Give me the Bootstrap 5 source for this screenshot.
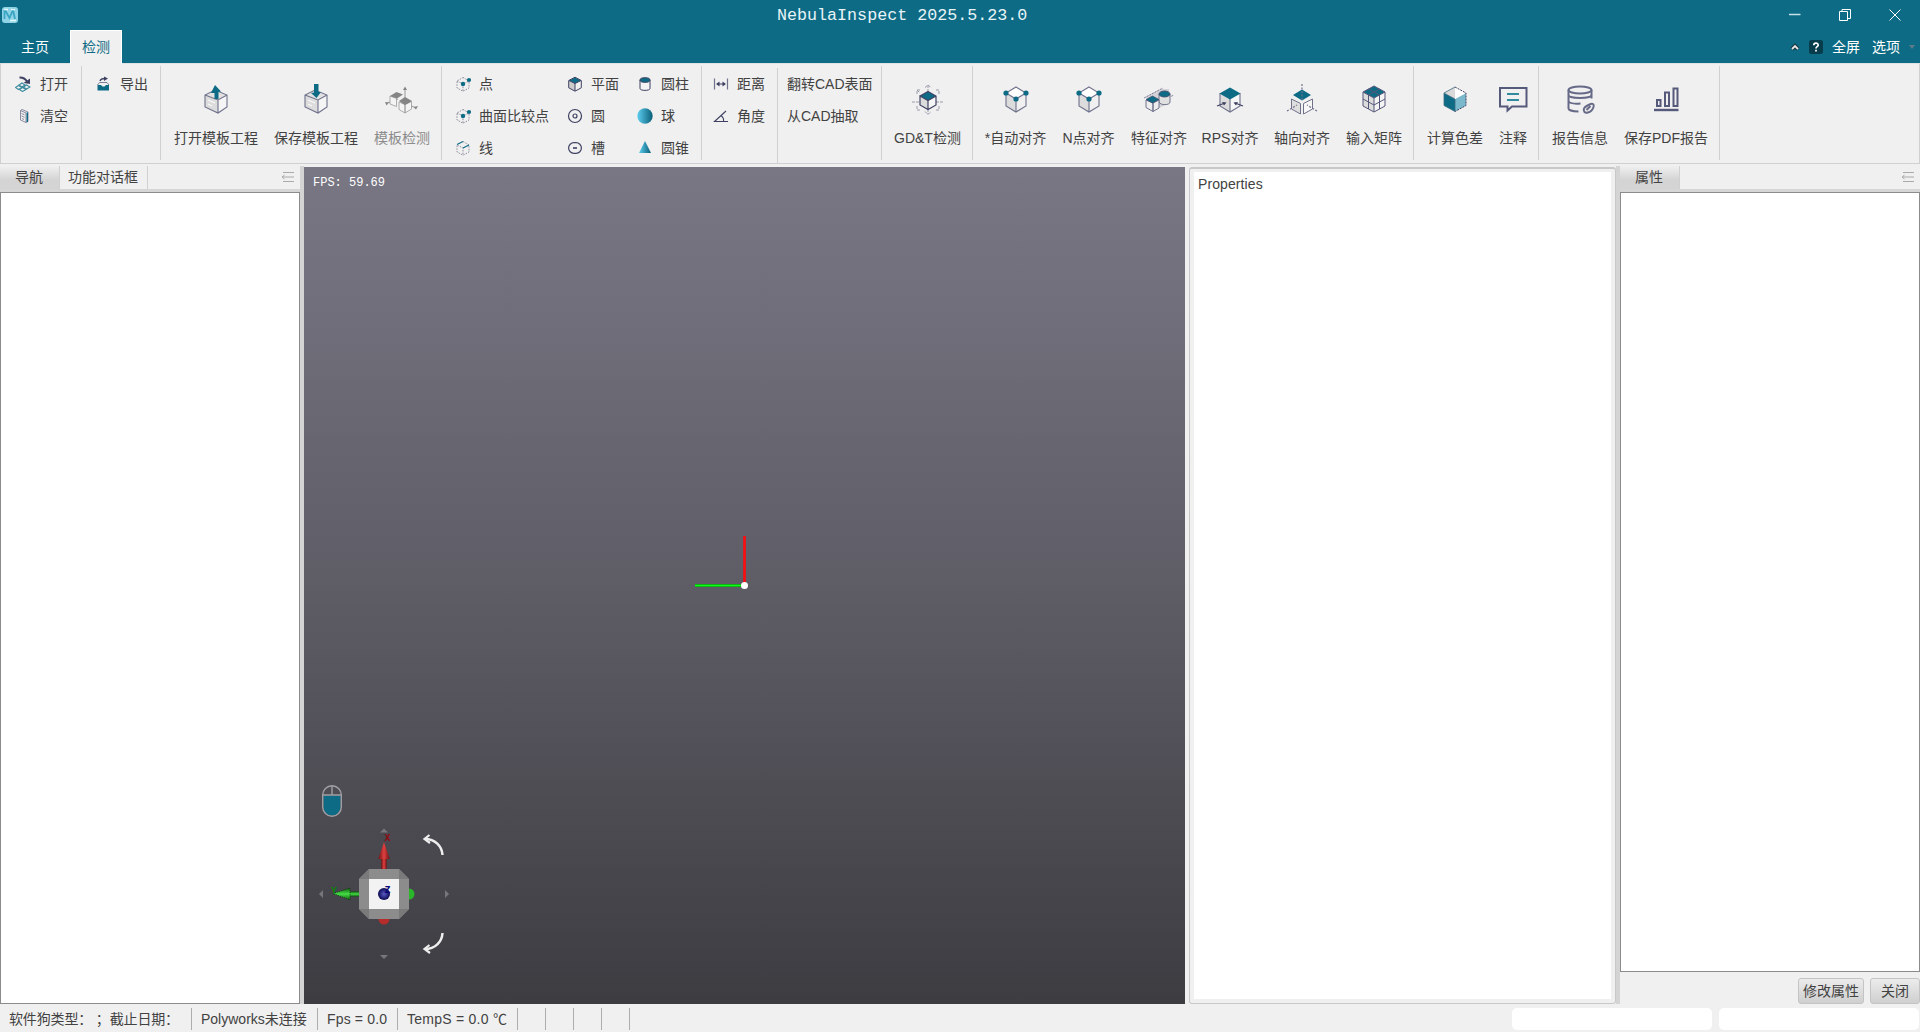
<!DOCTYPE html>
<html lang="zh-CN">
<head>
<meta charset="utf-8">
<title>NebulaInspect 2025.5.23.0</title>
<link rel="stylesheet" href="https://cdn.jsdelivr.net/npm/bootstrap@5.3.0/dist/css/bootstrap.min.css">
<style>
:root{--teal:#0d6b85;--ink:#3f4163;--panel:#f0f0f0;--rule:#d0d0d0}
body{width:1920px;height:1032px;overflow:hidden;background:var(--panel);color:#424242;font:14px/20px "Liberation Sans","Noto Sans CJK SC",sans-serif}
svg{display:block;flex:none;fill:none}
.titlebar{height:63px;background:var(--teal);color:#fff}
.caption-row{height:30px}
.app-title{font:16.7px/32px "Liberation Mono",monospace;color:#e8f4f7}
.side{width:777px}
.tab-row{height:33px}
.rtab{width:70px;padding-right:0;line-height:34px;text-align:center}
.rtab.on{width:52px;background:var(--panel);color:var(--teal);border:1px solid #fff;border-bottom:0;line-height:33px;height:34px}
.win-ctl{gap:38px;padding-right:19px}
.ribbon{height:101px;border:1px solid var(--rule);border-top-color:#dfe3e4}
.grp{height:94px;margin-top:2px;border-right:1px solid var(--rule);flex:none}
.grp.tall{height:96px;margin-top:4px}
.tcol{padding-top:2px}
.tall.tcol{padding-top:0}
.tool{height:32px;gap:9px;white-space:nowrap}
.g-open{width:81px;padding-left:14px}
.g-export{width:79px;padding-left:13px}
.g-template{width:281px;padding-left:5px}
.g-feature{width:260px;padding-left:13px}
.g-feature .tool{gap:8px}
.c1{width:112px}.c2{width:70px}
.g-dist{width:76px;padding-left:11px}
.g-dist .tool{gap:8px}
.g-cad{width:104px;padding-left:9px}
.g-gdt{width:91px;padding-left:4px}
.g-align{width:441px;padding-left:5px}
.g-color{width:125px;padding-left:5px}
.g-report{width:181px;padding-left:5px}
.big{padding:17px 8px 0;gap:13px;white-space:nowrap}
.big svg{width:32px;height:32px}
.big.off{color:#8b8b8b}
.g-align .big{width:72px;padding-left:0;padding-right:0;flex:none}
.g-align .big:first-child{width:75px}
.g-align .big:nth-child(2){width:71px}
.g-align .big:nth-child(3){width:70px}
.big.note{padding-left:6px}
.work{height:840px}
.dock{width:300px;padding-top:2px}
.dock-tabs{height:26px;border-bottom:3px solid #d6d6d6}
.dtab{height:23px;line-height:22px;border-right:1px solid var(--rule)}
.dtab.on{background:linear-gradient(#f0f0f0,#d4d4d4 60%)}
.w-nav{width:60px;padding-left:15px}.w-dlg{width:88px;padding-left:8px}
.tree{background:#fff;border:1px solid #8c8c8c}
.split{width:4px;background:#d4d4d4;margin-top:2px}
.view{width:881px;margin-top:3px;background:linear-gradient(#797784,#5e5d66 50%,#3d3c41)}
.fps{top:8px;left:9px;font:12px/17px "Liberation Mono",monospace;color:#fff}
.props{width:427px;margin:3px 0 0 4px;border:1px solid #c8c8c8;border-top-width:2px;border-radius:3px;padding:3px 4px 4px}
.props>div{background:#fff;height:100%;padding:2px 4px;letter-spacing:.1px}
.btn-row{height:32px;gap:6px;padding-top:6px}
.btn.act{height:26px;padding:0;font-size:14px;line-height:24px;border:1px solid #c4c4c4;border-radius:3px;background:linear-gradient(#ececec,#cfcfcf);color:#424242}
.a1{width:66px}.a2{width:50px}
.status{height:28px;padding-top:4px}
.cell{height:22px;line-height:23px;border-right:1px solid #adadad;padding-left:9px;white-space:pre;flex:none}
.s1{width:192px;letter-spacing:-.15px}.s2{width:126px}.s3{width:80px;letter-spacing:.15px}.s4{width:120px;letter-spacing:.25px}.s5{width:28px}
.field{width:200px;height:22px;border-radius:5px;background:#fff}
.fields{gap:7px;padding-right:1px}
</style>
<script src="https://cdn.jsdelivr.net/npm/bootstrap@5.3.0/dist/js/bootstrap.bundle.min.js"></script>
</head>
<body>
<svg width="0" height="0" class="position-absolute">
 <defs>
  <linearGradient id="shine"><stop offset="0" stop-color="#5dcdf0"/><stop offset="1" stop-color="#0a5f78"/></linearGradient>
  <linearGradient id="rg"><stop offset="0" stop-color="#6e1212"/><stop offset=".5" stop-color="#e04040"/><stop offset="1" stop-color="#6e1212"/></linearGradient>
  <linearGradient id="gg" x2="0" y2="1"><stop offset="0" stop-color="#0c5a0c"/><stop offset=".5" stop-color="#45dd45"/><stop offset="1" stop-color="#0c5a0c"/></linearGradient>
  <radialGradient id="bg"><stop offset="0" stop-color="#5a5ac8"/><stop offset="1" stop-color="#0a0a50"/></radialGradient>
  <symbol id="pt" viewBox="0 0 16 16" overflow="visible"><path d="M8 1.5 14 5v7l-6 3.200L2 12V5ZM2 5l6 3 6-3M8 8v7" stroke="#8d8ea0" stroke-dasharray="1.5 1.2"/><circle cx="8" cy="8" r="2.200" fill="#0d6b85"/><circle cx="14" cy="4" r="2.100" fill="#0d6b85"/></symbol>
  <symbol id="box" viewBox="0 0 32 32"><path d="M5 12v12l13 6V17Z" fill="#dcdcdc"/><path d="M18 17v13l9-6V12Z" fill="#f5f5f5"/><path d="M5 12 15 7l12 5-9 5Z" fill="#e2e2e2"/><path d="M5 12v12l13 6 9-6V12L15 7ZM5 12l13 5 9-5M18 17v13" stroke="#70728c" stroke-width="1.1"/><path d="m8 17 7 3M8 21l4 2" stroke="#fff" stroke-width="1"/></symbol>
  <symbol id="ncube" viewBox="0 0 32 32"><path d="M6 10v13l10 6V16Z" fill="#dcdcdc"/><path d="m6 10 10-6 10 6-10 6Z" fill="#fff"/><path d="m16 4 10 6v13l-10 6-10-6V10ZM6 10l10 6 10-6M16 16v13" stroke="#70728c" stroke-width="1.1"/><g fill="#0d6b85"><circle cx="6" cy="10" r="2.6"/><circle cx="26" cy="10" r="2.6"/><circle cx="16" cy="16" r="2.6"/></g></symbol>
  <symbol id="menu" viewBox="0 0 14 12"><path d="M2 1.500h11M1 6h12M2 10.500h11M3.500 4 1 6l2.500 2" stroke="#aaa"/></symbol>
 </defs>
</svg>

<header class="titlebar">
 <div class="caption-row d-flex">
  <div class="side d-flex align-items-center">
   <svg width="20" height="20" viewBox="0 0 20 20"><rect x="2" y="2" width="16" height="16" rx="3" fill="#8fd4e6"/><path d="M4.500 5v9M5 5l4.500 8L13 5l2 9" stroke="#3aa5c4" stroke-width="1.800"/><path d="M4 4.500h4M11 4.500h4M10 15.500h6" stroke="#e4f8fd" stroke-width="1.500"/></svg>
  </div>
  <div class="app-title">NebulaInspect 2025.5.23.0</div>
  <div class="win-ctl d-flex align-items-center ms-auto">
   <svg width="12" height="12" viewBox="0 0 12 12"><path d="M0 5.500h11.500" stroke="#c5e0e7" stroke-width="1.500"/></svg>
   <svg width="12" height="12" viewBox="0 0 12 12"><path d="M.5 2.500h8v9h-8ZM3 2.500v-2h8.500v9H8.500" stroke="#fff"/></svg>
   <svg width="12" height="12" viewBox="0 0 12 12"><path d="m.5.5 11 11m0-11-11 11" stroke="#fff"/></svg>
  </div>
 </div>
 <div class="tab-row d-flex">
  <div class="rtab">主页</div>
  <div class="rtab on">检测</div>
  <div class="d-flex align-items-center ms-auto pe-1">
   <svg width="10" height="8" viewBox="0 0 10 8" class="me-2"><path d="M2 6 5 3l3 3" stroke="#17333c" stroke-width="4"/><path d="M2 6 5 3l3 3" stroke="#e6e6e6" stroke-width="1.800"/></svg>
   <svg width="16" height="16" viewBox="0 0 16 16"><rect x="1" y="1" width="14" height="14" rx="2.500" fill="#073c4b"/><path d="M5.800 6.200C5.800 3.500 10.200 3.600 10.200 6c0 1.600-2.200 1.600-2.200 3.400M8 10.800v1.700" stroke="#fff" stroke-width="1.700"/></svg>
   <span class="ms-2">全屏</span><span class="ms-2 ps-1">选项</span>
   <svg width="8" height="6" viewBox="0 0 8 6" class="ms-2"><path d="M1 1h6L4 5Z" fill="#5d7d87"/></svg>
  </div>
 </div>
</header>

<nav class="ribbon d-flex">
 <div class="grp g-open tcol">
  <div class="tool d-flex align-items-center"><svg width="16" height="16" viewBox="0 0 16 16"><path d="m4 9 3-2 3 2-3 2Zm-3.500 2.500 3-2 3.500 2-3.500 2Zm8-.5 3-2 3.500 2-3.500 2Zm-4 2.500 3-2 3.500 2-3.500 2Z" stroke="#3d8ba0" stroke-width="1.100"/><path d="M4.500 1.500c4-.2 6 1.500 7.500 4" stroke="#3f4163" stroke-width="1.800"/><path d="m8.500 7 6.500-4.500V8Z" fill="#3f4163"/></svg><span>打开</span></div>
  <div class="tool d-flex align-items-center"><svg width="16" height="16" viewBox="0 0 16 16"><path d="M5.500 2.500 11 5v9.500L5.500 12ZM5.500 2.500 7 1.500l6 2.500v9.500l-2 1" stroke="#80819a" stroke-width=".9"/><path d="M12.300 4.500v9.500" stroke="#0d6b85" stroke-width="1.400"/><path d="m6.500 5.500 3 1.300M6.500 8l3 1.300M7 10.500l2 1" stroke="#8d8ea0"/></svg><span>清空</span></div>
 </div>
 <div class="grp g-export tcol">
  <div class="tool d-flex align-items-center"><svg width="16" height="16" viewBox="0 0 16 16"><path d="M2.500 9h3.500l1.500 1.500h2L11 9h3v5.500H2.500Z" fill="#0d6b85"/><path d="m2.500 9 2-2.500h7.500L14 9" stroke="#70728c" stroke-width=".9"/><path d="M5 5c.5-2 2-2.500 5-2.500" stroke="#3f4163" stroke-width="1.300"/><path d="m9 .5 4 2L9 5Z" fill="#3f4163"/></svg><span>导出</span></div>
 </div>
 <div class="grp g-template d-flex">
  <div class="big d-flex flex-column align-items-center"><svg><use href="#box"/><path d="M14.500 16v-6H11l4-8 6 6.500-2.500.5v7Z" fill="#0d6b85"/></svg><span>打开模板工程</span></div>
  <div class="big d-flex flex-column align-items-center"><svg><use href="#box"/><path d="M14 1h4.500v8h2.500l-4.500 6L11 10l3-.5Z" fill="#0d6b85"/></svg><span>保存模板工程</span></div>
  <div class="big off d-flex flex-column align-items-center"><svg viewBox="0 0 32 32" overflow="visible"><path d="M19 24V5M12 16 1 20m18 0 11 5" stroke="#999"/><path d="m4 13 6.500 2.500v8L4 21ZM13 19l6 2.500V30l-6-3.500ZM19 21.500l6.500-3V26L19 30Z" fill="#f4f4f4" stroke="#999" stroke-width=".8"/><path d="M4 13l6.500-4L17 11.500l-6 4ZM13 18l6-4 7 4-7 4Z" fill="#858585"/><path d="m17 7 2-3.500L21 7ZM-1 19l4 .5-2.500 3Zm33 4-2 3.500-2.500-2.500Z" fill="#858585"/></svg><span>模板检测</span></div>
 </div>
 <div class="grp g-feature tcol d-flex">
  <div class="c1">
   <div class="tool d-flex align-items-center"><svg width="16" height="16" overflow="visible"><use href="#pt" width="16" height="16"/></svg><span>点</span></div>
   <div class="tool d-flex align-items-center"><svg width="16" height="16" overflow="visible"><use href="#pt" width="16" height="16"/></svg><span>曲面比较点</span></div>
   <div class="tool d-flex align-items-center"><svg width="16" height="16" viewBox="0 0 16 16"><path d="M8 1.500 14 5v7l-6 3.200L2 12V5l6 3v7" stroke="#8d8ea0" stroke-dasharray="1.500 1.200"/><path d="m2 4.500 6-3M8 8l6-3" stroke="#0d6b85" stroke-width="1.200"/></svg><span>线</span></div>
  </div>
  <div class="c2">
   <div class="tool d-flex align-items-center"><svg width="16" height="16" viewBox="0 0 16 16"><path d="m2 4.500 6 3V15l-6-3Z" fill="#ccc"/><path d="m2 4.500 6-3 6 3-6 3Z" fill="#0d6b85"/><path d="m8 1.200 6.300 3.300v7.300L8 15.200l-6.300-3.400V4.500ZM2 4.500l6 3 6-3M8 7.500V15" stroke="#3f4163"/></svg><span>平面</span></div>
   <div class="tool d-flex align-items-center"><svg width="16" height="16" viewBox="0 0 16 16"><circle cx="8" cy="8" r="6.500" stroke="#3f4163" stroke-width="1.200"/><circle cx="8" cy="8" r="2" stroke="#3f4163" stroke-width="1.200"/></svg><span>圆</span></div>
   <div class="tool d-flex align-items-center"><svg width="16" height="16" viewBox="0 0 16 16"><rect x="1.600" y="2.700" width="12.800" height="10.600" rx="5.300" stroke="#3f4163" stroke-width="1.200"/><path d="M6 8h4" stroke="#3f4163" stroke-width="1.600"/></svg><span>槽</span></div>
  </div>
  <div>
   <div class="tool d-flex align-items-center"><svg width="16" height="16" viewBox="0 0 16 16"><path d="M3 4v8.500c0 2.500 10 2.500 10 0V4" fill="#f4f4f4" stroke="#3f4163"/><ellipse cx="8" cy="4" rx="5" ry="2.300" fill="#0d6b85" stroke="#3f4163"/></svg><span>圆柱</span></div>
   <div class="tool d-flex align-items-center"><svg width="16" height="16"><circle cx="8" cy="8" r="7.700" fill="url(#shine)"/></svg><span>球</span></div>
   <div class="tool d-flex align-items-center"><svg width="16" height="16"><path d="M8 1 14 13H2Z" fill="url(#shine)"/></svg><span>圆锥</span></div>
  </div>
 </div>
 <div class="grp g-dist tcol tall">
  <div class="tool d-flex align-items-center"><svg width="16" height="16" viewBox="0 0 16 16"><path d="M1.500 2.500v11M14.500 2.500v11" stroke="#70728c" stroke-width="1.200"/><path d="M4 8h8" stroke="#3f4163"/><path d="m3 8 3.500-2.500v5ZM13 8 9.500 5.500v5Z" fill="#3f4163"/></svg><span>距离</span></div>
  <div class="tool d-flex align-items-center"><svg width="16" height="16" viewBox="0 0 16 16"><path d="M15 13.500H1.500L13 3M8 7.500c2 1.500 3 3.500 2.500 6" stroke="#3f4163" stroke-width="1.100"/></svg><span>角度</span></div>
 </div>
 <div class="grp g-cad tcol">
  <div class="tool d-flex align-items-center">翻转CAD表面</div>
  <div class="tool d-flex align-items-center">从CAD抽取</div>
 </div>
 <div class="grp g-gdt d-flex">
  <div class="big d-flex flex-column align-items-center"><svg viewBox="-1 0 32 32"><path d="M0 19h32M16 2v29M13 4.500 16 2l3 2.500M13 28.500l3 3 3-3M5 7l3 3M5 11V7h4M27 11V7h-4M5 23v4h4m18-4v4h-4" stroke="#9a9bab" stroke-dasharray="3 1"/><path d="m8 13 8 4v9l-8-4Z" fill="#dcdcdc"/><path d="m16 17 8-4v9l-8 4Z" fill="#f6f6f6"/><path d="m8 13 8-4.500 8 4.500-8 4.500Z" fill="#0d6b85"/><path d="m16 8.500 8 4.500v9l-8 4.500L8 22v-9l8 4.500 8-4.500M16 17v9M8 13l8-4.500" stroke="#3f4163" stroke-width="1.200"/></svg><span>GD&amp;T检测</span></div>
 </div>
 <div class="grp g-align d-flex">
  <div class="big d-flex flex-column align-items-center"><svg><use href="#ncube"/></svg><span>*自动对齐</span></div>
  <div class="big d-flex flex-column align-items-center"><svg><use href="#ncube"/></svg><span>N点对齐</span></div>
  <div class="big d-flex flex-column align-items-center"><svg viewBox="0 0 32 32"><path d="M2 14 17 6h9l1 14-11 5" fill="#d2d2d7"/><path d="M1 15 20 5M9 22l22-10" stroke="#80819a" stroke-dasharray="2 1"/><path d="M16 11v8c1 3.500 11 3.500 11 0v-8" fill="#e0e0e0" stroke="#70728c"/><ellipse cx="21.500" cy="11" rx="5.500" ry="3" fill="#0d6b85" stroke="#3f4163" stroke-width=".8"/><path d="m3 17 7 3v8.500l-7-4Zm7 3 6-3v8l-6 3.500Z" fill="#eee" stroke="#70728c"/><path d="m3 16.500 6.500-3.500 6.500 3.500-6.500 3.500Z" fill="#0d6b85" stroke="#3f4163" stroke-width=".6"/></svg><span>特征对齐</span></div>
  <div class="big d-flex flex-column align-items-center"><svg viewBox="0 0 32 32"><path d="m6 10 10 5v14L6 23Z" fill="#dcdcdc"/><path d="m16 15 10-5v13l-10 6Z" fill="#f7f7f7"/><path d="M6 10v13l10 6 10-6V10M16 15v14" stroke="#70728c" stroke-width="1.100"/><path d="M5.500 10.500 16 4.500l10.500 6L16 16.500Z" fill="#0d6b85"/><path d="m3 23 8-3m10 0 8 3" stroke="#3f4163" stroke-width="1.200"/><path d="m8 19 4.500.5L10 22.500Zm16 0-4.500.5 2.500 3Z" fill="#3f4163"/></svg><span>RPS对齐</span></div>
  <div class="big d-flex flex-column align-items-center"><svg viewBox="0 0 32 32"><path d="m5.500 16 9 4.500V31l-9-5Z" fill="#dedede" stroke="#70728c"/><path d="m17.500 20.500 9-4.500v10l-9 5Z" fill="#f7f7f7" stroke="#70728c"/><path d="m7 12 9-5.500 9 5.500-9 5.500Z" fill="#0d6b85"/><path d="M16 1v16M1 28l10-6m20 6-10-6" stroke="#70728c" stroke-dasharray="2 1.500" stroke-width="1.200"/></svg><span>轴向对齐</span></div>
  <div class="big d-flex flex-column align-items-center"><svg viewBox="0 0 32 32"><path d="m5 9 11 6v14L5 23Z" fill="#dcdcdc"/><path d="m16 15 11-6v14l-11 6Z" fill="#f4f4f4"/><path d="m5 9 11-6 11 6-11 6Z" fill="#0d6b85"/><path d="M16 3 27 9v14l-11 6-11-6V9ZM5 9l11 6 11-6M16 15v14M5 16l11 6 11-6M10.500 12v14M21.500 12v14M10.500 6l11 6m0-6-11 6" stroke="#55577a"/></svg><span>输入矩阵</span></div>
 </div>
 <div class="grp g-color d-flex">
  <div class="big d-flex flex-column align-items-center"><svg viewBox="0 0 32 32"><path d="m5 10 11 6v12.500L5 22.500Z" fill="#0d6b85"/><path d="m16 16 11-6v12.500l-11 6Z" fill="#7ab8cb"/><path d="m5 10 11-6v12Z" fill="#d9d9d9"/><path d="m16 4 11 6-11 6Z" fill="#fff"/><path d="m16 4 11 6v12.500l-11 6" stroke="#3f4163" stroke-dasharray="2 1"/><path d="M16 28.500 5 22.500V10l11-6M5 10l11 6v12" stroke="#3f6b80" stroke-width=".8"/></svg><span>计算色差</span></div>
  <div class="big note d-flex flex-column align-items-center"><svg viewBox="0 0 32 32" class="mx-n1"><path d="M3 5h26.500v18.500H15l-4.500 4v-4H3Z" stroke="#55597a" stroke-width="2"/><path d="M10 11h12M10 17h12" stroke="#328a9f" stroke-width="2"/></svg><span>注释</span></div>
 </div>
 <div class="grp g-report d-flex">
  <div class="big d-flex flex-column align-items-center"><svg viewBox="0 0 32 32"><g stroke="#666a87" stroke-width="2"><ellipse cx="16" cy="7" rx="11.500" ry="3.500"/><path d="M4.500 7v18.500c0 1.500 4 3 10 3M27.500 7v8.500M4.500 12c0 4 23 4 23 0M4.500 18c1 2.500 6 3 12 2.500"/><path d="M20.500 29c-2-3 0-5 3-6.500s4-2.500 5.500-1.500.5 4.500-1.500 6.500-5.500 3-7 1.500Zm2-2 4-4"/></g></svg><span>报告信息</span></div>
  <div class="big d-flex flex-column align-items-center"><svg viewBox="0 0 32 32"><path d="M4 27h24.500" stroke="#55597a" stroke-width="2.400"/><path d="M7 17h3.500v6H7Zm8-7.500h4V23h-4Zm8.500-4h4V23h-4Z" stroke="#55597a" stroke-width="2"/></svg><span>保存PDF报告</span></div>
 </div>
</nav>

<main class="work d-flex">
 <section class="dock d-flex flex-column">
  <div class="dock-tabs d-flex"><div class="dtab on w-nav">导航</div><div class="dtab w-dlg">功能对话框</div><svg class="ms-auto mt-1 me-1" width="15" height="14"><use href="#menu" width="14" height="12" y="1"/></svg></div>
  <div class="tree flex-grow-1"></div>
 </section>
 <div class="split"></div>
 <section class="view position-relative">
  <div class="fps position-absolute">FPS: 59.69</div>
  <svg width="881" height="837" viewBox="304 167 881 837">
   <path d="M744.500 536v49" stroke="#d02028" stroke-width="3"/><path d="M744.500 536v49" stroke="#ff0d0d" stroke-width="1.600"/>
   <path d="M695 585.500h50" stroke="#0a9d18" stroke-width="3"/><path d="M695 585.500h50" stroke="#12ff12" stroke-width="1.600"/>
   <circle cx="744.500" cy="585.500" r="3.500" fill="#fff"/>
   <path d="M323.500 795.500h17V807a8.500 8.500 0 0 1-17 0Z" fill="#0d6b85"/><path d="M323 795h18M332 786v9" stroke="#a0a0a4" stroke-width="1.400"/>
   <rect x="322.700" y="785.700" width="18.600" height="30.600" rx="9.300" stroke="#a0a0a4" stroke-width="1.400"/>
   <g fill="#77777b"><path d="m380 832.500 4-4 4 4ZM380 955h8l-4 4ZM323 890v8l-4-4ZM445 890v8l4-4Z"/></g>
   <rect x="381.200" y="858" width="5.500" height="12" fill="url(#rg)"/><path d="m384 842 5.700 17h-11.400Z" fill="url(#rg)"/>
   <rect x="349" y="891.500" width="12" height="5" fill="url(#gg)"/><path d="m333 893.500 17-5.500v12Z" fill="url(#gg)"/><path d="m333 893.500 17-5.500v12Z" stroke="#102810" stroke-dasharray="1 1.200" stroke-width=".8"/>
   <circle cx="384" cy="919" r="5.500" fill="#b52c2c"/><circle cx="409" cy="894" r="5.500" fill="#2bb52b"/>
   <path d="M369 869h30l10 10v30l-10 10h-30l-10-10v-30Z" fill="#8c8c8c"/><path d="m369 869-10 10h10Zm30 0 10 10h-10Zm10 40-10 10v-10Zm-50 0 10 10v-10Z" fill="#7a7a7a"/>
   <rect x="369" y="879" width="30" height="30" fill="#f2f2f2"/><circle cx="384" cy="894" r="6" fill="url(#bg)"/>
   <g font-family="Liberation Mono,monospace" font-size="10" font-weight="bold"><text x="384.500" y="840.500" fill="#8c0a12">X</text><text x="331" y="893.500" fill="#078307">Y</text><text x="384.500" y="893" fill="#06067a">Z</text></g>
   <g stroke="#eee" stroke-width="2.500"><path d="M425 839c10 0 17 7 17.500 16M425 949c10 0 17-7 17.500-16"/><path d="m429.500 835-5 4 5.500 4M429.500 945l-5 4 5.500 4" stroke-width="2.200"/></g>
  </svg>
 </section>
 <section class="props"><div>Properties</div></section>
 <div class="split"></div>
 <section class="dock d-flex flex-column">
  <div class="dock-tabs d-flex"><div class="dtab on w-nav">属性</div><svg class="ms-auto mt-1 me-1" width="15" height="14"><use href="#menu" width="14" height="12" y="1"/></svg></div>
  <div class="tree flex-grow-1"></div>
  <div class="btn-row d-flex justify-content-end"><button class="btn act a1">修改属性</button><button class="btn act a2">关闭</button></div>
 </section>
</main>

<footer class="status d-flex">
 <div class="cell s1">软件狗类型： ；截止日期：</div><div class="cell s2">Polyworks未连接</div><div class="cell s3">Fps = 0.0</div><div class="cell s4">TempS = 0.0 ℃</div>
 <div class="cell s5"></div><div class="cell s5"></div><div class="cell s5"></div><div class="cell s5"></div>
 <div class="fields d-flex ms-auto"><div class="field"></div><div class="field"></div></div>
</footer>
</body>
</html>
